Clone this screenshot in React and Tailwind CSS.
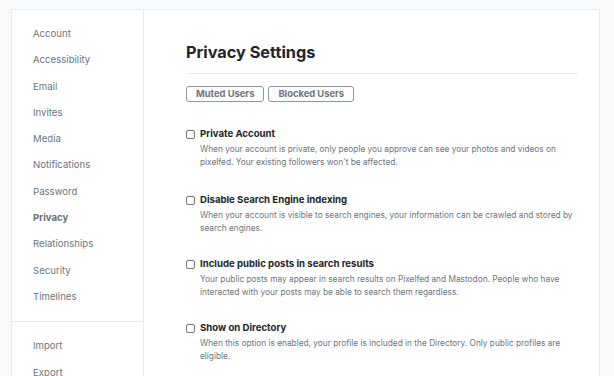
import React from 'react';

const NAV = ['Account', 'Accessibility', 'Email', 'Invites', 'Media', 'Notifications', 'Password', 'Privacy', 'Relationships', 'Security', 'Timelines'];
const NAV_BOTTOM = ['Import', 'Export'];

const OPTIONS = [
    {
        title: 'Private Account',
        desc: "When your account is private, only people you approve can see your photos and videos on pixelfed. Your existing followers won't be affected."
    },
    {
        title: 'Disable Search Engine indexing',
        desc: 'When your account is visible to search engines, your information can be crawled and stored by search engines.'
    },
    {
        title: 'Include public posts in search results',
        desc: 'Your public posts may appear in search results on Pixelfed and Mastodon. People who have interacted with your posts may be able to search them regardless.'
    },
    {
        title: 'Show on Directory',
        desc: 'When this option is enabled, your profile is included in the Directory. Only public profiles are eligible.'
    }
];

const NavItem = ({ label, active }) => (
    <div className={`h-[26.3px] flex items-center text-[9.6px] ${active ? 'font-bold text-[#6a7177]' : 'text-[#6c757d]'}`}>
        {label}
    </div>
);

const App = () => {
    return (
        <div className="h-[376px] overflow-hidden bg-[#f8f9fb] pt-[9px] pl-[11px] pr-[14px] font-['Inter',sans-serif]">
            <div className="flex bg-white border border-[#e9ecef] h-[420px]">
                <aside className="w-[132px] shrink-0 border-r border-[#e9ecef]">
                    <div className="pt-[11px] pb-[11px] pl-[21px] border-b border-[#e9ecef]">
                        {NAV.map(n => <NavItem key={n} label={n} active={n === 'Privacy'} />)}
                    </div>
                    <div className="pt-[11px] pl-[21px]">
                        {NAV_BOTTOM.map(n => <NavItem key={n} label={n} />)}
                    </div>
                </aside>

                <main className="flex-1 pl-[42px] pr-[21px] pt-[32px]">
                    <h1 className="text-[16.3px] leading-[20px] font-bold text-[#212529]">Privacy Settings</h1>
                    <hr className="mt-[11px] border-0 border-t border-[#e9ecef]" />
                    <div className="flex gap-[4px] mt-[12px]">
                        <button className="h-[16px] px-[9px] rounded-[3px] border border-[#8f959b] text-[9.4px] font-bold text-[#6c757d] leading-none">Muted Users</button>
                        <button className="h-[16px] px-[9px] rounded-[3px] border border-[#8f959b] text-[9.4px] font-bold text-[#6c757d] leading-none">Blocked Users</button>
                    </div>

                    <div className="mt-[26px] flex flex-col gap-[23px]">
                        {OPTIONS.map((o, i) => (
                            <div key={o.title} className={i === 0 ? 'pb-[2px]' : ''}>
                                <label className="flex items-center gap-[5px] h-[13px]">
                                    <span className="w-[9px] h-[9px] rounded-[2px] border border-[#767676] bg-white shrink-0" />
                                    <span className="text-[9.6px] font-bold text-[#212529]">{o.title}</span>
                                </label>
                                <p className="mt-[2px] ml-[14px] text-[8.3px] leading-[13px] text-[#6c757d]">{o.desc}</p>
                            </div>
                        ))}
                    </div>
                </main>
            </div>
        </div>
    );
};

export default App;
